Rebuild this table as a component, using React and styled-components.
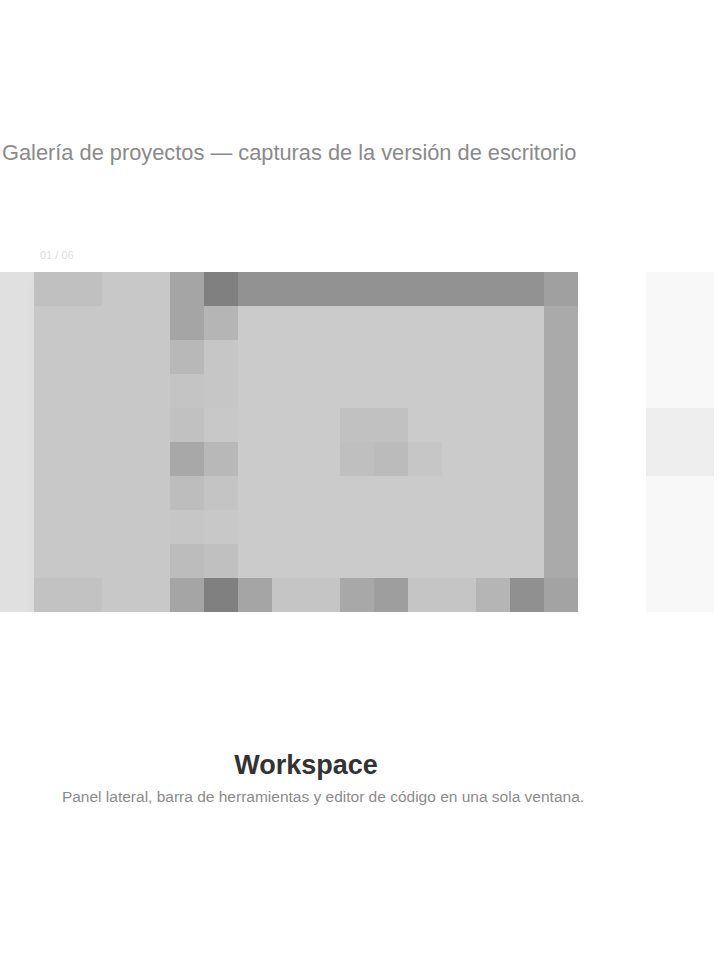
import React from "react";
import styled, { createGlobalStyle } from "styled-components";

const GlobalStyle = createGlobalStyle`
  html, body {
    margin: 0;
    padding: 0;
    background: #ffffff;
    font-family: "Liberation Sans", Arial, sans-serif;
  }
`;

// slide picture: blocks of the app screenshot shown in the main card
const SIDE_COL = ["#a5a5a5", "#a5a5a5", "#b8b8b8", "#c4c4c4", "#c1c1c1", "#a8a8a8", "#bdbdbd", "#c6c6c6", "#bcbcbc", "#a5a5a5"];
const ICON_COL = ["#808080", "#b5b5b5", "#c6c6c6", "#c6c6c6", "#c8c8c8", "#b8b8b8", "#c4c4c4", "#c8c8c8", "#c0c0c0", "#808080"];
const BOTTOM_BAR = [
  { x: 204, w: 34, c: "#a5a5a5" },
  { x: 238, w: 68, c: "#c5c5c5" },
  { x: 306, w: 34, c: "#a8a8a8" },
  { x: 340, w: 34, c: "#9e9e9e" },
  { x: 374, w: 68, c: "#c5c5c5" },
  { x: 442, w: 34, c: "#b5b5b5" },
  { x: 476, w: 34, c: "#909090" },
];

function SlidePicture() {
  return (
    <svg width="544" height="340" viewBox="0 0 544 340">
      <rect x="0" y="0" width="544" height="340" fill="#cbcbcb" />
      {/* left panel */}
      <rect x="0" y="0" width="136" height="340" fill="#c8c8c8" />
      <rect x="0" y="0" width="68" height="34" fill="#c0c0c0" />
      <rect x="0" y="306" width="68" height="34" fill="#c2c2c2" />
      {/* tool columns */}
      {SIDE_COL.map((c, i) => (
        <rect key={"s" + i} x="136" y={i * 34} width="34" height="34" fill={c} />
      ))}
      {ICON_COL.map((c, i) => (
        <rect key={"i" + i} x="170" y={i * 34} width="34" height="34" fill={c} />
      ))}
      {/* title bar */}
      <rect x="204" y="0" width="306" height="34" fill="#929292" />
      {/* content blob */}
      <rect x="306" y="136" width="68" height="34" fill="#c1c1c1" />
      <rect x="306" y="170" width="34" height="34" fill="#bfbfbf" />
      <rect x="340" y="170" width="34" height="34" fill="#bbbbbb" />
      <rect x="374" y="170" width="34" height="34" fill="#c6c6c6" />
      {/* right frame */}
      <rect x="510" y="0" width="34" height="34" fill="#a0a0a0" />
      <rect x="510" y="34" width="34" height="272" fill="#aaaaaa" />
      <rect x="510" y="306" width="34" height="34" fill="#a3a3a3" />
      {/* bottom bar */}
      {BOTTOM_BAR.map((b, i) => (
        <rect key={"b" + i} x={b.x} y="306" width={b.w} height="34" fill={b.c} />
      ))}
    </svg>
  );
}

function App() {
  return (
    <Styled.Page>
      <GlobalStyle />
      <Styled.Heading>
        Galería de proyectos — capturas de la versión de escritorio
      </Styled.Heading>
      <Styled.Counter>01 / 06</Styled.Counter>
      <Styled.Track>
        <Styled.Peek $side="prev" />
        <Styled.Slide>
          <SlidePicture />
        </Styled.Slide>
        <Styled.Peek $side="next">
          <Styled.PeekBand />
        </Styled.Peek>
      </Styled.Track>
      <Styled.Caption>
        <Styled.CaptionTitle>Workspace</Styled.CaptionTitle>
        <Styled.CaptionText>
          Panel lateral, barra de herramientas y editor de código en una sola ventana.
        </Styled.CaptionText>
      </Styled.Caption>
    </Styled.Page>
  );
}

const Styled = {
  Page: styled.div`
    width: 720px;
    min-height: 960px;
    display: flex;
    flex-direction: column;
    padding-top: 136px;
    box-sizing: border-box;
  `,
  Heading: styled.h2`
    margin: 0;
    height: 34px;
    line-height: 34px;
    padding-left: 2px;
    font-size: 21.8px;
    font-weight: 400;
    color: #8a8a8a;
    white-space: nowrap;
  `,
  Counter: styled.div`
    margin-top: 68px;
    height: 34px;
    line-height: 34px;
    padding-left: 40px;
    font-size: 11px;
    color: #dddddd;
  `,
  Track: styled.div`
    display: flex;
    height: 340px;
    overflow: hidden;
  `,
  Peek: styled.div`
    flex: none;
    width: ${(p) => (p.$side === "prev" ? "34px" : "68px")};
    margin-left: ${(p) => (p.$side === "next" ? "68px" : "0")};
    background: ${(p) => (p.$side === "prev" ? "#e0e0e0" : "#f8f8f8")};
    display: flex;
    flex-direction: column;
    justify-content: center;
  `,
  PeekBand: styled.div`
    height: 68px;
    background: #eeeeee;
  `,
  Slide: styled.div`
    flex: none;
    width: 544px;
    height: 340px;
    box-shadow: 0 4px 10px rgba(0, 0, 0, 0.03);
    svg {
      display: block;
    }
  `,
  Caption: styled.div`
    width: 646px;
    margin-top: 136px;
    display: flex;
    flex-direction: column;
    align-items: center;
  `,
  CaptionTitle: styled.div`
    align-self: flex-start;
    width: 612px;
    text-align: center;
    height: 34px;
    line-height: 34px;
    font-size: 27px;
    font-weight: 700;
    color: #333333;
  `,
  CaptionText: styled.div`
    height: 34px;
    line-height: 30px;
    font-size: 15.5px;
    color: #8c8c8c;
    white-space: nowrap;
  `,
};

export default App;
